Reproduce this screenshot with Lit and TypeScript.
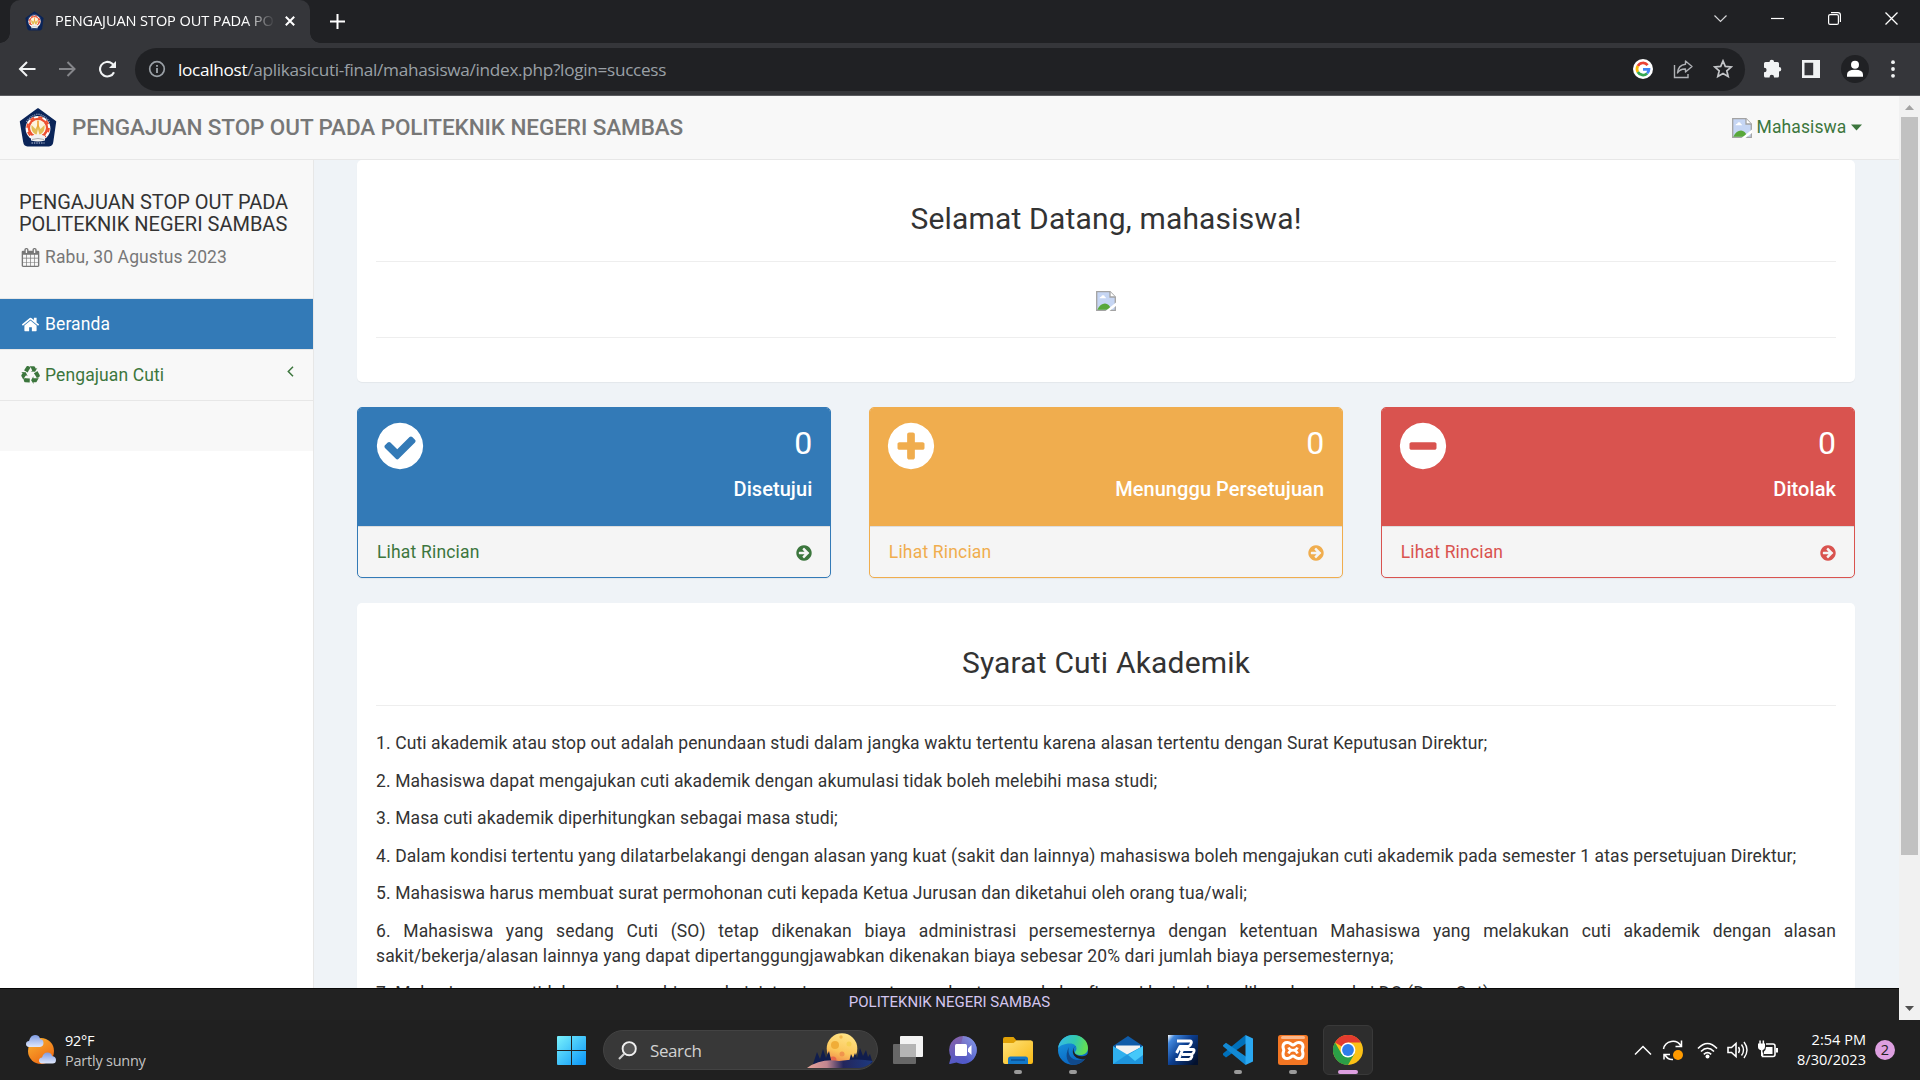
import { LitElement, html, css, svg, type SVGTemplateResult } from "lit";
import { customElement, property } from "lit/decorators.js";
import { classMap } from "lit/directives/class-map.js";

const DISC =
  "M1664 896q0 209-103 385.5t-279.5 279.5-385.5 103-385.5-103-279.5-279.5-103-385.5 103-385.5 279.5-279.5 385.5-103 385.5 103 279.5 279.5 103 385.5z";

const GLYPHS: Record<string, string> = {
  check:
    "M1412 734q0-28-18-46l-91-90q-19-19-45-19t-45 19l-408 407-226-226q-19-19-45-19t-45 19l-91 90q-18 18-18 46 0 27 18 45l362 362q19 19 45 19 27 0 46-19l543-543q18-18 18-45z" + DISC,
  plus:
    "M1344 960v-128q0-26-19-45t-45-19h-256v-256q0-26-19-45t-45-19h-128q-26 0-45 19t-19 45v256h-256q-26 0-45 19t-19 45v128q0 26 19 45t45 19h256v256q0 26 19 45t45 19h128q26 0 45-19t19-45v-256h256q26 0 45-19t19-45z" + DISC,
  minus:
    "M1344 960v-128q0-26-19-45t-45-19h-768q-26 0-45 19t-19 45v128q0 26 19 45t45 19h768q26 0 45-19t19-45z" + DISC,
  arrow:
    "M1413 896q0-27-18-45l-91-91-362-362q-18-18-45-18t-45 18l-91 91q-18 18-18 45t18 45l189 189h-502q-26 0-45 19t-19 45v128q0 26 19 45t45 19h502l-189 189q-18 18-18 45t18 45l91 91q18 18 45 18t45-18l362-362 91-91q18-18 18-45z" + DISC,
  home:
    "M1472 992v480q0 26-19 45t-45 19h-384v-384h-256v384h-384q-26 0-45-19t-19-45v-480q0-1 .5-3t.5-3l575-474 575 474q1 2 1 6zm223-69l-62 74q-8 9-21 11h-3q-13 0-21-7l-692-577-692 577q-12 8-24 7-13-2-21-11l-62-74q-8-10-7-23.5t11-21.5l719-599q32-26 76-26t76 26l244 204v-195q0-14 9-23t23-9h192q14 0 23 9t9 23v408l219 182q10 8 11 21.5t-7 23.5z",
  calendar:
    "M192 1664h288v-288h-288v288zm352 0h320v-288h-320v288zm-352-352h288v-320h-288v320zm352 0h320v-320h-320v320zm-352-384h288v-288h-288v288zm736 736h320v-288h-320v288zm-384-736h320v-288h-320v288zm768 736h288v-288h-288v288zm-384-352h320v-320h-320v320zm-352-864v-288q0-13-9.5-22.5t-22.5-9.5h-64q-13 0-22.5 9.5t-9.5 22.5v288q0 13 9.5 22.5t22.5 9.5h64q13 0 22.5-9.5t9.5-22.5zm736 864h288v-320h-288v320zm-384-384h320v-288h-320v288zm384 0h288v-288h-288v288zm32-480v-288q0-13-9.5-22.5t-22.5-9.5h-64q-13 0-22.5 9.5t-9.5 22.5v288q0 13 9.5 22.5t22.5 9.5h64q13 0 22.5-9.5t9.5-22.5zm384-64v1280q0 52-38 90t-90 38h-1408q-52 0-90-38t-38-90v-1280q0-52 38-90t90-38h128v-96q0-66 47-113t113-47h64q66 0 113 47t47 113v96h384v-96q0-66 47-113t113-47h64q66 0 113 47t47 113v96h128q52 0 90 38t38 90z",
  recycle:
    "M836 1169l-15 368-2 22-420-29q-36-3-67-31.5t-47-65.5q-11-27-14.5-55t4-65 12-55 21.5-64 19-53q78 12 509 28zm-387-586l180 379-147-92q-63 72-111.5 144.5t-72.5 125-39.5 94.5-18.5 63l-4 21-190-357q-17-26-18-56t6-47l8-18q35-63 114-188l-140-86zm1231 517l-188 359q-12 29-36.5 46.5t-43.5 20.5l-18 4q-71 7-219 12l8 164-230-367 211-362 7 173q170 16 283 5t170-33zm-785-924q-47 63-265 435l-317-187-19-12 225-356q20-31 60-45t80-10q24 2 48.5 12t42 21 41.5 33 36 34.5 36 39.5 32 35zm655 307l212 363q18 37 12.5 76t-27.5 74q-13 20-33 37t-38 28-48.5 22-47 16-51.5 14-46 12q-34-72-265-436l313-195zm-143-226l142-83-220 373-419-20 151-86q-34-89-75-166t-75.5-123.5-64.5-80-47-46.5l-17-13 405 1q31-3 58 10.5t39 28.5l11 15q39 61 112 190z",
};

const glyph = (name: string, size: number) => html`<svg width=${size} height=${size} viewBox="0 0 1792 1792" style="display:block;flex:none"><path fill="currentColor" fill-rule="evenodd" d=${GLYPHS[name]}></path></svg>`;

const icon = (w: number, h: number, body: SVGTemplateResult, box = `0 0 ${w} ${h}`) =>
  html`<svg width=${w} height=${h} viewBox=${box} style="display:block;flex:none">${body}</svg>`;

const crest = (w: number, h: number) => icon(w, h, svg`
  <path d="M19 1 36.4 13.6 33.500 34Q33 37.600 30 37.600H8.500Q5.500 37.600 5 34L1.600 13.600Z" fill="#0b2559" stroke="#0b2559" stroke-width="1.600" stroke-linejoin="round"/>
  <path d="M7.500 14Q11 8 19 6 27 8 30.500 14" fill="none" stroke="#8d9ab8" stroke-width="1.400" stroke-dasharray="1.200 .9"/>
  <path d="M12.500 35h13" stroke="#8d9ab8" stroke-width="1.600" stroke-dasharray="1.400 1"/>
  <circle cx="19" cy="20.500" r="12.400" fill="#fff"/>
  <circle cx="19" cy="20" r="9" fill="none" stroke="#ee5030" stroke-width="2.600"/>
  <circle cx="19" cy="20" r="10.800" fill="none" stroke="#ee5030" stroke-width="2" stroke-dasharray="4.200 4.280"/>
  <circle cx="19" cy="19.600" r="7.700" fill="#fdf3dc"/>
  <path d="M12.500 17q-1 7 5 10l1.500-6 1.500 6q6-3 5-10l-4 4-2.500-5-2.500 5Z" fill="#e3bd55"/>
  <path d="M12 28q7-3.500 14 0v4.500q-7 2-14 0Z" fill="#f1f1f1"/>
  <path d="M13 31.500q6-2 12 0" fill="none" stroke="#9a9a9a" stroke-width=".8"/>
  <path d="M19 12.500v7" stroke="#f0a030" stroke-width="1.600"/>`, "0 0 38 39");

const brokenImage = () => icon(20, 20, svg`
  <path d="M.7.7H14l5.300 5.300v13.300H.7Z" fill="#c6d6f4" stroke="#a3a3a3" stroke-width="1.300"/>
  <path d="M14 .7V6h5.300" fill="#fff" stroke="#a3a3a3" stroke-width="1.300"/>
  <path d="M3.500 7.300q0-1.600 1.700-1.600.6-1.700 2.100-1.400 1.600.2 1.600 1.600 1.300.1 1.300 1.400Z" fill="#fff"/>
  <path d="M1.300 18.700q3-6.200 7.700-6.200 4 0 6.500 6.200Z" fill="#58a83a"/>
  <path d="M20 11.500 9.500 20h4L20 15Z" fill="#fff"/>`);

@customElement("browser-chrome")
class BrowserChrome extends LitElement {
  static styles = css`
    :host { display: block; height: 96px; font-family: "Open Sans", "Noto Sans", sans-serif; }
    .strip { height: 43px; background: #202124; display: flex; align-items: stretch; padding-left: 10px; }
    .tab { width: 300px; box-sizing: border-box; background: #35363a; border-radius: 10px 10px 0 0; display: flex; align-items: center; padding: 0 15px 1px 15px; position: relative; }
    .tab::before, .tab::after { content: ""; position: absolute; bottom: 0; width: 10px; height: 10px; }
    .tab::before { left: -10px; background: radial-gradient(circle at 0 0, #202124 9.5px, #35363a 10px); }
    .tab::after { right: -10px; background: radial-gradient(circle at 100% 0, #202124 9.5px, #35363a 10px); }
    .label { margin-left: 11px; padding-bottom: 2px; width: 220px; overflow: hidden; white-space: nowrap; color: #fff; font-size: 14.6px; letter-spacing: -.12px; -webkit-mask-image: linear-gradient(90deg, #000 190px, transparent 220px); mask-image: linear-gradient(90deg, #000 190px, transparent 220px); }
    .tab-close { margin-left: auto; }
    .plus { margin: 14px 0 0 20px; }
    .wins { margin-left: auto; display: flex; padding: 12px 21px 0 0; gap: 44px; }
    .bar { height: 53px; box-sizing: border-box; background: #35363a; border-bottom: 1px solid #5b5c60; display: flex; align-items: center; padding: 0 23px 0 17px; }
    .nav { display: flex; gap: 20px; width: 118px; }
    .omni { width: 1610px; height: 43px; box-sizing: border-box; background: #202124; border-radius: 22px; display: flex; align-items: center; padding: 0 12px 0 12px; }
    .url { margin-left: 11px; font-size: 17.2px; letter-spacing: -.3px; color: #9aa0a6; white-space: nowrap; flex: 1; }
    .host { color: #fff; }
    .acts { display: flex; align-items: center; gap: 20px; }
    .ext { display: flex; align-items: center; margin-left: 17px; flex: 1; justify-content: space-between; }
  `;
  render() {
    return html`
      <div class="strip">
        <div class="tab">
          ${crest(19, 20)}
          <span class="label">PENGAJUAN STOP OUT PADA POLITEKNIK</span>
          <span class="tab-close">${icon(10, 10, svg`<path d="M.8.8l8.400 8.400M9.200.8.8 9.200" stroke="#fff" stroke-width="2"/>`)}</span>
        </div>
        <div class="plus">${icon(15, 15, svg`<path d="M7.500 0v15M0 7.500h15" stroke="#fff" stroke-width="2"/>`)}</div>
        <div class="wins">
          ${icon(13, 13, svg`<path d="M.5 3.500l6 6 6-6" fill="none" stroke="#d5d6d8" stroke-width="1.200"/>`)}
          ${icon(13, 13, svg`<path d="M0 6.500h13" stroke="#fff" stroke-width="1.200"/>`)}
          ${icon(13, 13, svg`<rect x=".6" y="2.600" width="9.800" height="9.800" rx="1.500" fill="none" stroke="#fff" stroke-width="1.200"/><path d="M3 .6h7q2.400 0 2.400 2.400v7" fill="none" stroke="#fff" stroke-width="1.200"/>`)}
          ${icon(14, 13, svg`<path d="M.5.5l12 12M12.500.5l-12 12" stroke="#fff" stroke-width="1.300"/>`)}
        </div>
      </div>
      <div class="bar">
        <div class="nav">
          ${icon(20, 18, svg`<path d="M18.500 9H3.500M10 2 3 9l7 7" fill="none" stroke="#f1f3f4" stroke-width="2"/>`)}
          ${icon(20, 18, svg`<path d="M2 9h15M10.500 2l7 7-7 7" fill="none" stroke="#85868a" stroke-width="2"/>`)}
          ${icon(20, 18, svg`<path d="M17 12.200A7.300 7.300 0 1 1 15 3.500L17 5.500" fill="none" stroke="#f1f3f4" stroke-width="2.100"/><path d="M19 1v7h-7Z" fill="#f1f3f4"/>`)}
        </div>
        <div class="omni">
          ${icon(20, 20, svg`<circle cx="10" cy="10" r="7.300" fill="none" stroke="#9aa0a6" stroke-width="1.700"/><path d="M10 9v5M10 6v1.800" stroke="#9aa0a6" stroke-width="1.900"/>`)}
          <span class="url"><span class="host">localhost</span>/aplikasicuti-final/mahasiswa/index.php?login=success</span>
          <div class="acts">
            ${icon(20, 20, svg`<circle cx="10" cy="10" r="10" fill="#fff"/><g fill="none" stroke-width="2.700"><path d="M14.600 6.100A6 6 0 0 0 4.800 7" stroke="#ea4335"/><path d="M4.800 7a6 6 0 0 0 0 6" stroke="#fbbc05"/><path d="M4.800 13a6 6 0 0 0 9.300 1.400" stroke="#34a853"/><path d="M14.100 14.400Q16 12.500 16 10.300H10" stroke="#4285f4"/></g>`)}
            ${icon(20, 20, svg`<path d="M1.500 6v12.500H15V15" fill="none" stroke="#b0b2b6" stroke-width="1.400"/><path d="M12.500 2 19 7.500 12.500 13v-3Q7 9.700 4.500 14 5 6 12.500 5.200Z" fill="none" stroke="#b0b2b6" stroke-width="1.400" stroke-linejoin="round"/>`)}
            ${icon(20, 20, svg`<path d="M10 1.900l2.300 5.500 6 .5-4.500 3.900 1.400 5.800L10 14.500l-5.200 3.100 1.400-5.800L1.700 7.900l6-.5Z" fill="none" stroke="#c3c5c8" stroke-width="1.700"/>`)}
          </div>
        </div>
        <div class="ext">
          ${icon(20, 20, svg`<path d="M7.500 3a2.300 2.300 0 0 1 4.600 0H15.500a1.500 1.500 0 0 1 1.500 1.500V8a2.200 2.200 0 0 1 0 4.600v4.400a1.500 1.500 0 0 1-1.500 1.500H12V18a2.200 2.200 0 0 0-4.400 0v.5H3.500A1.500 1.500 0 0 1 2 17v-3.700h.3a2.300 2.300 0 0 0 0-4.600H2V4.500A1.500 1.500 0 0 1 3.500 3Z" fill="#f1f3f4"/>`)}
          ${icon(18, 18, svg`<path fill-rule="evenodd" d="M0 0h18v18H0ZM2.500 2.800v12.400h8.700V2.800Z" fill="#f1f3f4"/>`)}
          ${icon(28, 28, svg`<circle cx="14" cy="14" r="14" fill="#202124"/><circle cx="14" cy="9.700" r="4" fill="#fff"/><path d="M6 21.800v-2.300q0-4.700 8-4.700t8 4.700v2.300Z" fill="#fff"/>`)}
          ${icon(8, 18, svg`<g fill="#f1f3f4"><circle cx="4" cy="2.200" r="1.900"/><circle cx="4" cy="9" r="1.900"/><circle cx="4" cy="15.800" r="1.900"/></g>`)}
        </div>
      </div>`;
  }
}

@customElement("stat-card")
class StatCard extends LitElement {
  @property() tone = "primary";
  @property() glyphName = "check";
  @property() label = "";
  static styles = css`
    :host { display: block; }
    .card { height: 171px; box-sizing: border-box; border: 1px solid var(--c); border-radius: 5px; overflow: hidden; background: #f5f5f5; box-shadow: 0 1px 1px rgba(0,0,0,.05); }
    .primary { --c: #337ab7; --link: #3c763d; }
    .warning { --c: #f0ad4e; --link: #f0ad4e; }
    .danger { --c: #d9534f; --link: #d9534f; }
    .head { height: 118px; background: var(--c); color: #fff; display: flex; justify-content: space-between; padding: 10.5px 18px 0 14.5px; box-sizing: border-box; }
    .nums { text-align: right; padding-top: 6px; }
    .n { font-size: 32px; line-height: 36px; letter-spacing: 0; }
    .t { font-size: 20px; font-weight: 500; line-height: 22px; padding-top: 17px; letter-spacing: .07px; }
    .foot { height: 51px; border-top: 1px solid #ddd; box-sizing: border-box; display: flex; align-items: center; justify-content: space-between; padding: 1px 17px 0 19px; color: var(--link); font-size: 17.5px; letter-spacing: .18px; }
  `;
  render() {
    return html`<div class=${classMap({ card: true, [this.tone]: true })}>
      <div class="head">${glyph(this.glyphName, 54)}
        <div class="nums"><div class="n">0</div><div class="t">${this.label}</div></div>
      </div>
      <div class="foot"><span>Lihat Rincian</span>${glyph("arrow", 18)}</div>
    </div>`;
  }
}

const RULES = [
  "1. Cuti akademik atau stop out adalah penundaan studi dalam jangka waktu tertentu karena alasan tertentu dengan Surat Keputusan Direktur;",
  "2. Mahasiswa dapat mengajukan cuti akademik dengan akumulasi tidak boleh melebihi masa studi;",
  "3. Masa cuti akademik diperhitungkan sebagai masa studi;",
  "4. Dalam kondisi tertentu yang dilatarbelakangi dengan alasan yang kuat (sakit dan lainnya) mahasiswa boleh mengajukan cuti akademik pada semester 1 atas persetujuan Direktur;",
  "5. Mahasiswa harus membuat surat permohonan cuti kepada Ketua Jurusan dan diketahui oleh orang tua/wali;",
  html`6. Mahasiswa yang sedang Cuti (SO) tetap dikenakan biaya administrasi persemesternya dengan ketentuan Mahasiswa yang melakukan cuti akademik dengan alasan <span class="whole">sakit/bekerja/alasan lainnya</span> yang dapat dipertanggungjawabkan dikenakan biaya sebesar 20% dari jumlah biaya persemesternya;`,
  "7. Mahasiswa yang tidak membayar biaya administrasi persemesternya dan tanpa ada konfirmasi lanjut akan dikenakan sanksi DO (Drop Out).",
];

@customElement("campus-page")
class CampusPage extends LitElement {
  static styles = css`
    :host { display: flex; height: 924px; font-family: Roboto, "Liberation Sans", sans-serif; font-size: 17.5px; line-height: 25px; letter-spacing: .115px; color: #333; }
    .page { width: 1899px; height: 924px; display: flex; flex-direction: column; background: #fff; }
    .top { height: 64px; box-sizing: border-box; flex: none; background: #f8f8f8; border-bottom: 1px solid #e7e7e7; display: flex; align-items: center; padding: 0 37px 0 19px; }
    .brand { margin-left: 15px; color: #777; font-weight: 500; font-size: 22.5px; letter-spacing: -.09px; white-space: nowrap; }
    .user { margin-left: auto; display: flex; align-items: center; gap: 4.5px; color: #3c763d; }
    .cols { flex: 1; min-height: 0; display: flex; overflow: hidden; }
    .side { width: 313px; flex: none; border-right: 1px solid #e7e7e7; }
    .menu { height: 291px; background: #f8f8f8; display: flex; flex-direction: column; }
    .info { height: 139px; box-sizing: border-box; padding: 31px 0 0 19px; border-bottom: 1px solid #e7e7e7; }
    .info h4 { margin: 0; font-weight: 400; font-size: 20px; line-height: 22px; letter-spacing: -.01px; white-space: nowrap; }
    .date { display: flex; align-items: center; gap: 5px; color: #777; margin-top: 10px; padding-left: 2px; height: 25px; }
    .item { height: 51px; box-sizing: border-box; padding: 0 19px 0 21px; display: flex; align-items: center; gap: 5px; border-bottom: 1px solid #e7e7e7; color: #3c763d; }
    .item.on { background: #337ab7; color: #fff; background-clip: padding-box; }
    .fold { margin-left: auto; padding-bottom: 8px; }
    .main { flex: 1; background: #eff3f7; padding: 1px 44px 0 43px; overflow: hidden; }
    .panel { background: #fff; border-radius: 5px; box-shadow: 0 1px 1px rgba(0,0,0,.05); padding: 0 19px; }
    .hello { height: 222px; margin-top: -1px; box-sizing: border-box; }
    h3 { margin: 0; font-weight: 400; font-size: 30px; line-height: 34px; letter-spacing: .18px; text-align: center; padding: 42px 0 25px; }
    .hr { height: 1px; background: #eee; }
    .pic { height: 75px; display: flex; align-items: center; justify-content: center; padding-top: 3px; box-sizing: border-box; }
    .stats { display: grid; grid-template-columns: repeat(3, 1fr); gap: 37.5px; margin: 25px 0; }
    .rules { height: 600px; }
    .rules h3 { padding-top: 43px; }
    .rules p { margin: 0 0 12.5px; text-align: justify; }
    .whole { white-space: nowrap; }
    .list { padding-top: 25px; }
    .foot { height: 32px; box-sizing: border-box; flex: none; background: #222; border-top: 1px solid #080808; color: #d4c6f0; font-size: 15px; line-height: 26px; letter-spacing: 0; text-align: center; }
    .scroll { width: 21px; background: #f1f1f1; display: flex; flex-direction: column; align-items: center; justify-content: space-between; padding: 9px 1px 9px 0; box-sizing: border-box; }
    .thumb { width: 17px; height: 738px; background: #c1c1c1; margin: 7px 0 auto 1px; }
  `;
  render() {
    return html`
      <div class="page">
        <div class="top">
          ${crest(38, 39)}<span class="brand">PENGAJUAN STOP OUT PADA POLITEKNIK NEGERI SAMBAS</span>
          <span class="user">${brokenImage()}<span>Mahasiswa</span>${icon(11, 7, svg`<path d="M0 .5h11L5.500 6.500Z" fill="#3c763d"/>`)}</span>
        </div>
        <div class="cols">
          <div class="side"><div class="menu">
            <div class="info"><h4>PENGAJUAN STOP OUT PADA<br>POLITEKNIK NEGERI SAMBAS</h4>
              <div class="date">${glyph("calendar", 19)}<span>Rabu, 30 Agustus 2023</span></div></div>
            <div class="item on">${glyph("home", 19)}<span>Beranda</span></div>
            <div class="item">${glyph("recycle", 19)}<span>Pengajuan Cuti</span><span class="fold">${icon(7, 11, svg`<path d="M6 .8 1.300 5.500 6 10.200" fill="none" stroke="#3c763d" stroke-width="1.500"/>`)}</span></div>
          </div></div>
          <div class="main">
            <div class="panel hello"><h3>Selamat Datang, mahasiswa!</h3><div class="hr"></div><div class="pic">${brokenImage()}</div><div class="hr"></div></div>
            <div class="stats">
              <stat-card tone="primary" .glyphName=${"check"} label="Disetujui"></stat-card>
              <stat-card tone="warning" .glyphName=${"plus"} label="Menunggu Persetujuan"></stat-card>
              <stat-card tone="danger" .glyphName=${"minus"} label="Ditolak"></stat-card>
            </div>
            <div class="panel rules"><h3>Syarat Cuti Akademik</h3><div class="hr"></div><div class="list">${RULES.map((r) => html`<p>${r}</p>`)}</div></div>
          </div>
        </div>
        <div class="foot">POLITEKNIK NEGERI SAMBAS</div>
      </div>
      <div class="scroll">
        ${icon(9, 5, svg`<path d="M0 5 4.500 0 9 5Z" fill="#a3a3a3"/>`)}
        <div class="thumb"></div>
        ${icon(9, 5, svg`<path d="M0 0 4.500 5 9 0Z" fill="#505050"/>`)}
      </div>`;
  }
}

const APPS: { art: SVGTemplateResult; run?: string }[] = [
  { art: svg`<rect y="9" width="23" height="20" rx="1" fill="#676767"/><rect x="7" y="1" width="23" height="21" rx="1" fill="#f3f3f3"/><path d="M7 9h16v13H7Z" fill="#b5b5b5"/>` },
  { art: svg`<defs><linearGradient id="ch" x2=".3" y2="1"><stop stop-color="#8a63a8"/><stop offset="1" stop-color="#5059c9"/></linearGradient><linearGradient id="ch2" x1="1" x2=".3" y2=".7"><stop stop-color="#7d9df0"/><stop offset="1" stop-color="#7d9df0" stop-opacity="0"/></linearGradient></defs><path d="M15 1a14 14 0 1 1-6.500 26.500L2 29q-1 0-.7-1L3 22A14 14 0 0 1 15 1Z" fill="url(#ch)"/><path d="M15 1a14 14 0 1 1-6.500 26.500Z" fill="url(#ch2)"/><rect x="7" y="9" width="12" height="12" rx="1.500" fill="#fff"/><path d="M20 13.500 23.500 10v10L20 16.500Z" fill="#fff"/>` },
  { run: "idle", art: svg`<defs><linearGradient id="fo" x2="1" y2="1"><stop stop-color="#ffe27a"/><stop offset="1" stop-color="#f8b914"/></linearGradient></defs><path d="M0 4q0-2 2-2h8.500l3 3.500H28v5H0Z" fill="#e0a106"/><path d="M0 8h10.500l3-2.500H28q2 0 2 2V27q0 2-2 2H2q-2 0-2-2Z" fill="url(#fo)"/><path d="M5 29v-5q0-2.500 2.500-2.500h15Q25 21.500 25 24v5Z" fill="#1278c9"/><path d="M8 25h14" stroke="#0b4f92" stroke-width="1.500"/>` },
  { run: "idle", art: svg`<defs><linearGradient id="e1" x2="1" y2=".2"><stop stop-color="#35b8f0"/><stop offset=".6" stop-color="#33c9ad"/><stop offset="1" stop-color="#62dd55"/></linearGradient><linearGradient id="e2" y2="1" x2=".4"><stop stop-color="#1b9de2"/><stop offset="1" stop-color="#0a66c2"/></linearGradient></defs><circle cx="15" cy="15" r="15" fill="url(#e2)"/><path d="M0 13.500C1 5.500 7 0 15 0c9 0 15 6 15 13 0 4.500-3.500 7-7.500 7-4 0-5.700-1.500-5.700-2.500 0-1 1.700-1.600 1.700-4 0-2.700-2.700-5-6.300-5C6 8.500 1 11 0 13.500Z" fill="url(#e1)"/><path d="M11 12c-2 7 2 13 9 13 3.500 0 6-1 7.500-2.200C25 27.500 20 30 15 30 9.500 28.500 6 21 11 12Z" fill="#114a8b"/><path d="M17.700 11.500c-2 .5-2.500 3-1.700 5.200 1 3 4.500 4.800 8.500 4.500 2.500-.2 4.500-1.200 6-3l-2 5c-4 2-12 1-13.500-5.200-.7-3 1-6.500 2.700-6.500Z" fill="#202020"/>` },
  { art: svg`<path d="M0 11 15 1l15 10-15 9Z" fill="#0f5ba8"/><path d="M3 10.500h24V14l-12 8L3 14Z" fill="#f2f2f2"/><path d="M0 11l15 9 15-9v18H0Z" fill="#2fb0ee"/><path d="M0 29 15 19 30 11v18Z" fill="#1e95dd"/><path d="M15 20 30 11v9L22 26Z" fill="#45c8fa"/>` },
  { art: svg`<defs><linearGradient id="pb" x2="1" y2=".8"><stop stop-color="#fff"/><stop offset=".15" stop-color="#4187dd"/><stop offset=".5" stop-color="#0c3f91"/><stop offset="1" stop-color="#03112e"/></linearGradient></defs><rect width="30" height="30" fill="url(#pb)"/><g fill="none" stroke="#fff" stroke-width="2.800" stroke-linejoin="round"><path d="M9 6h13q1.800 0 1.300 2T20.500 11.500H12L8.500 18"/><path d="M12 14.500h13q1.500 0 1 2T23.500 19.500H14M23 19.500q1.300.5.700 2.500T20.500 24.500H7.500M14.500 15l-4 9.500"/></g>` },
  { run: "idle", art: svg`<path d="M22.500 0 25 7 3 22.500 0 20q-.5-1 .3-1.800Z" fill="#0070ba"/><path d="M.3 11.500Q-.3 10.500.3 10L3 7.700 25 23l-2.500 7Z" fill="#1289d4"/><path d="M22.500 0 30 3.500v23L22.500 30V0Z" fill="#2aa8f2"/>` },
  { run: "idle", art: svg`<rect width="30" height="30" rx="2.500" fill="#f37623"/><rect x="3" y="1" width="24" height="3" rx="1.500" fill="#f9b78c"/><path d="M9.500 7.500c3 0 3.800 2.500 5.500 2.500s2.500-2.500 5.500-2.500c3.200 0 4.500 2 4.500 4.200 0 1.800-.8 2.500-.8 3.600s.8 1.800.8 3.600c0 2.800-1.500 4.600-4.500 4.600s-3.500-2.500-5.500-2.500-2.500 2.500-5.500 2.500S5 21.700 5 18.900c0-1.800.8-2.500.8-3.600S5 13.500 5 11.700C5 9.500 6.300 7.500 9.500 7.500Z" fill="#f37623" stroke="#fff" stroke-width="3"/><path d="M10.500 12.500q1 2.700 4.500 2.700t4.500-2.700M10.500 18.500q1-3.300 4.500-3.300t4.500 3.300" fill="none" stroke="#fff" stroke-width="2.600"/>` },
  { run: "active", art: svg`<circle cx="15" cy="15" r="15" fill="#fbc116"/><path d="M15 15 2 7.500A15 15 0 0 1 28 7.500H15Z" fill="#e33b2e"/><path d="M2 7.500A15 15 0 0 0 15 30l6.500-11.200L15 15 8.500 18.700Z" fill="#2b9f47"/><circle cx="15" cy="15" r="7.400" fill="#fff"/><circle cx="15" cy="15" r="5.900" fill="#2f7de9"/>` },
];

@customElement("task-bar")
class TaskBar extends LitElement {
  static styles = css`
    :host { display: flex; height: 60px; background: #202020; color: #fff; font-family: "Open Sans", "Noto Sans", sans-serif; font-size: 14.5px; line-height: 20px; align-items: center; box-sizing: border-box; }
    .weather { display: flex; align-items: center; gap: 9px; width: 531px; padding-left: 26px; box-sizing: border-box; letter-spacing: -.23px; }
    .lines { padding-top: 1.5px; }
    .dim { color: #c3c3c3; }
    .start { width: 72px; padding-left: 26px; box-sizing: border-box; }
    .search { width: 275px; height: 40px; box-sizing: border-box; border: 1px solid #434343; border-radius: 20px; background: #383838; display: flex; align-items: center; padding: 0 4px 0 14px; font-size: 17px; color: #d2d2d2; overflow: hidden; letter-spacing: -.4px; }
    .word { margin-left: 13px; flex: 1; padding-top: 1px; }
    .apps { display: flex; padding-left: 5px; gap: 5px; }
    .app { width: 50px; height: 50px; box-sizing: border-box; border-radius: 6px; position: relative; display: flex; align-items: center; justify-content: center; border: 1px solid transparent; }
    .active { background: #2d2d2d; border-color: #393939; }
    .idle::after, .active::after { content: ""; position: absolute; bottom: 0; width: 8px; height: 4px; border-radius: 2px; background: #9a9a9a; }
    .active::after { width: 20px; background: #dd9fe0; }
    .tray { margin-left: auto; display: flex; align-items: center; padding-right: 25px; }
    .clock { text-align: right; width: 86px; letter-spacing: .03px; }
    .badge { margin-left: 9px; width: 20px; height: 20px; border-radius: 10px; background: #dd9fe0; color: #222; text-align: center; font-size: 14.5px; }
  `;
  render() {
    return html`
      <div class="weather">
        ${icon(30, 30, svg`<defs><linearGradient id="su" x2=".6" y2="1"><stop stop-color="#fbb632"/><stop offset="1" stop-color="#ee6b14"/></linearGradient><linearGradient id="cl" y2="1" x2="0"><stop stop-color="#7e9be4"/><stop offset="1" stop-color="#e0e8fb"/></linearGradient></defs><circle cx="15" cy="16" r="13" fill="url(#su)"/><path d="M3 12q-3-.3-3-3t3-3Q4.500 0 9 0t5 4q3.500.5 3.500 4T14 12Z" fill="url(#cl)"/><path d="M16 28.500q-3-.3-3-3t3-3q1.500-5 5.500-5t4.500 3.500q4 .5 4 4t-3.500 3.500Z" fill="url(#cl)"/>`)}
        <div class="lines"><div>92°F</div><div class="dim">Partly sunny</div></div>
      </div>
      <div class="start">${icon(29, 29, svg`<defs><linearGradient id="wi" gradientUnits="userSpaceOnUse" x1="0" y1="0" x2="29" y2="29"><stop stop-color="#7af2fc"/><stop offset="1" stop-color="#0894f8"/></linearGradient></defs><path d="M1 0h13v14H0V1q0-1 1-1ZM15 0h13q1 0 1 1v13H15ZM0 15h14v14H1q-1 0-1-1ZM15 15h14v13q0 1-1 1H15Z" fill="url(#wi)"/>`)}</div>
      <div class="search">
        ${icon(19, 19, svg`<circle cx="11.200" cy="7.700" r="6.600" fill="#555" stroke="#f0f0f0" stroke-width="1.900"/><path d="M6.500 12.500 1 18" stroke="#d0d0d0" stroke-width="2.200"/>`)}
        <span class="word">Search</span>
        ${icon(66, 36, svg`<defs><linearGradient id="mo" x1=".6" x2=".3" y2="1"><stop stop-color="#ffe486"/><stop offset=".6" stop-color="#fbc65a"/><stop offset="1" stop-color="#ef8049"/></linearGradient><linearGradient id="gr" x2="1" y2="0"><stop stop-color="#e8a59b"/><stop offset=".3" stop-color="#c1858f"/><stop offset=".55" stop-color="#23265c"/><stop offset="1" stop-color="#1d3a80"/></linearGradient></defs><circle cx="35" cy="16.500" r="15.300" fill="url(#mo)"/><circle cx="28" cy="13" r="4" fill="#f0ad38"/><circle cx="42" cy="12" r="2.500" fill="#f6d055"/><circle cx="35" cy="22" r="2.500" fill="#f0944d"/><circle cx="26" cy="28" r="3.500" fill="#e8694b"/><circle cx="34" cy="5" r="1.700" fill="#f4b94a"/><path d="M6 32l4-12 3 7 3-10 3 9 3-7 3 13Z" fill="#101d4d"/><path d="M42 30l2-8 2 4 2-5 2 5 3-10 3 8 3-6 2 7 2-3 3 10Z" fill="#101d4d"/><path d="M0 36q14-10 32-7 18-3 34 0-5 6-14 7Z" fill="url(#gr)"/>`)}
      </div>
      <div class="apps">${APPS.map((a) => html`<div class=${classMap({ app: true, idle: a.run === "idle", active: a.run === "active" })}>${icon(30, 30, a.art)}</div>`)}</div>
      <div class="tray">
        ${icon(62, 22, svg`<path d="M7 15.500 15 7.500l8 8" fill="none" stroke="#fff" stroke-width="1.500"/><g fill="none" stroke="#fff" stroke-width="1.500"><path d="M35.500 10A9.500 9.500 0 0 1 53 7M53.500 1.500V7.500H47.500M36 20.500V15.500H42M37 16q3 5 8 4.500"/></g><circle cx="50" cy="16" r="5" fill="#ff9a00"/>`)}
        ${icon(90, 22, svg`<g fill="none" stroke="#fff" stroke-width="1.600"><path d="M8 9.500Q17.500-.5 27 9.500M11 12.500q6.500-6.500 13 0M13.800 15.300q3.700-3.500 7.400 0"/><path d="M38 8.500h3.500L46 4.500v13l-4.500-4H38Z"/><path d="M48.500 8q2 3 0 6M51.500 5.500q4 5.500 0 11M54 3q6 8 0 16" stroke-width="1.400"/><path d="M76 5h7q2 0 2 2v8.500q0 2-2 2H72.500v-4" /></g><circle cx="17.500" cy="17.500" r="2" fill="#fff"/><path d="M76 8h6.500v7H74v-2.500q2-1.500 2-4.500ZM86 9h2v4.500h-2ZM68 4.500h7V8q0 2.500-2.500 3.300V17H71v-5.700q-3-.8-3-3.300ZM69.300 1.500h1.500v3h-1.500ZM72.600 1.500h1.500v3h-1.500Z" fill="#fff"/>`)}
        <div class="clock">2:54 PM<br>8/30/2023</div>
        <div class="badge">2</div>
      </div>`;
  }
}

@customElement("app-root")
class AppRoot extends LitElement {
  static styles = css`
    :host { display: block; width: 1920px; height: 1080px; overflow: hidden; }
  `;
  render() {
    return html`<browser-chrome></browser-chrome><campus-page></campus-page><task-bar></task-bar>`;
  }
}
